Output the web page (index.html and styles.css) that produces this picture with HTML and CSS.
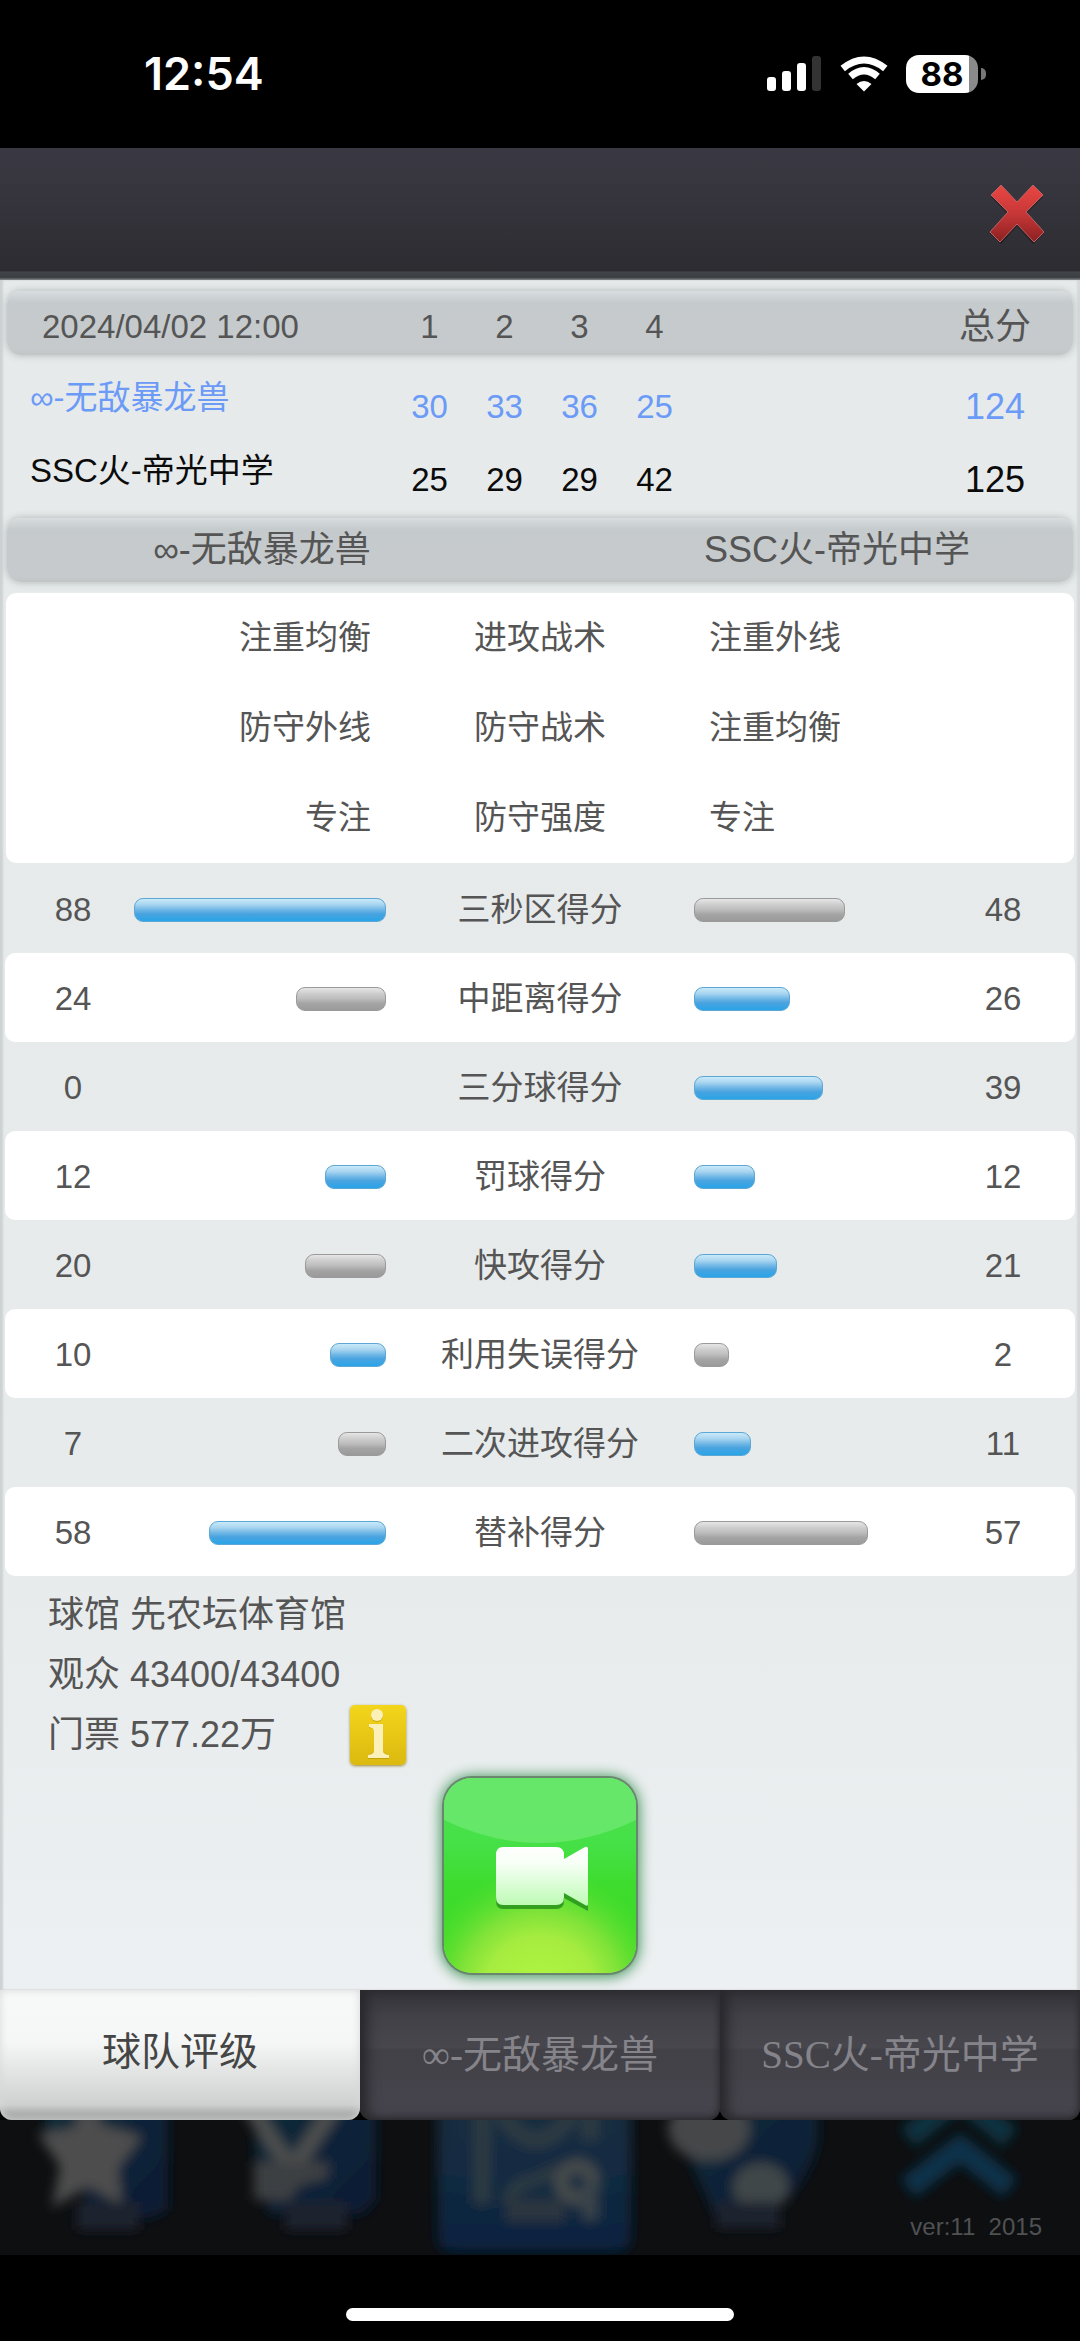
FILE: index.html
```html
<!DOCTYPE html>
<html lang="zh-CN">
<head>
<meta charset="utf-8">
<meta name="viewport" content="width=device-width, initial-scale=1">
<title>比赛统计</title>
<link rel="stylesheet" href="styles.css">
</head>
<body>
<div class="status">
  <time class="clock">12:54</time>
  <div class="status-icons">
    <svg width="56" height="36" viewBox="0 0 56 36" aria-hidden="true">
      <g fill="#fff"><rect x="1" y="21" width="9" height="14" rx="3"/><rect x="16" y="15" width="9" height="20" rx="3"/><rect x="31" y="7" width="9" height="28" rx="3"/></g>
      <rect x="46" y="0" width="9" height="35" rx="3" fill="#333"/>
    </svg>
    <svg width="48" height="36" viewBox="0 0 48 36" fill="none" stroke="#fff" stroke-width="7" aria-hidden="true">
      <path d="M2.700 12.500Q24 -4.500 45.300 12.500"/>
      <path d="M10.500 20.500Q24 9 37.500 20.500"/>
      <path d="M24 35.500L16.500 28Q24 22 31.500 28Z" fill="#fff" stroke="none"/>
    </svg>
    <div class="battery"><span class="level">88</span></div>
    <span class="cap"></span>
  </div>
</div>

<header class="topbar">
  <button class="close" aria-label="关闭">
    <svg width="56" height="60" viewBox="0 0 56 60" aria-hidden="true">
      <defs><linearGradient id="red" x1="0" y1="0" x2="0" y2="1"><stop offset="0" stop-color="#ea4743"/><stop offset=".5" stop-color="#c73737"/><stop offset="1" stop-color="#8c2021"/></linearGradient></defs>
      <path d="M12 4L28 21L44 4L54 13L37 30L55 49L44 60L28 42L12 60L1 49L19 30L2 13Z" fill="#221416" opacity=".6"/>
      <path d="M12 1L28 18L44 1L54 11L37 28L55 48L45 58L28 40L11 58L1 48L19 28L2 11Z" fill="url(#red)" stroke="#b96466" stroke-width="1"/>
    </svg>
  </button>
</header>

<main class="panel">
  <table class="score">
    <thead>
      <tr class="band score-row"><th class="date">2024/04/02 12:00</th><th>1</th><th>2</th><th>3</th><th>4</th><th class="total-head">总分</th></tr>
    </thead>
    <tbody>
      <tr class="score-row own"><th class="name">∞-无敌暴龙兽</th><td>30</td><td>33</td><td>36</td><td>25</td><td class="total">124</td></tr>
      <tr class="score-row"><th class="name">SSC火-帝光中学</th><td>25</td><td>29</td><td>29</td><td>42</td><td class="total">125</td></tr>
    </tbody>
  </table>

  <div class="band teams"><span>∞-无敌暴龙兽</span><span>SSC火-帝光中学</span></div>

  <table class="tactics">
    <tbody>
      <tr><td class="home">注重均衡</td><th>进攻战术</th><td>注重外线</td></tr>
      <tr><td class="home">防守外线</td><th>防守战术</th><td>注重均衡</td></tr>
      <tr><td class="home">专注</td><th>防守强度</th><td>专注</td></tr>
    </tbody>
  </table>

  <table class="stats">
    <tbody>
      <tr><td>88</td><td class="track left"><span class="bar lead" style="width:252px"></span></td><th>三秒区得分</th><td class="track"><span class="bar" style="width:151px"></span></td><td>48</td></tr>
      <tr><td>24</td><td class="track left"><span class="bar" style="width:90px"></span></td><th>中距离得分</th><td class="track"><span class="bar lead" style="width:96px"></span></td><td>26</td></tr>
      <tr><td>0</td><td class="track left"></td><th>三分球得分</th><td class="track"><span class="bar lead" style="width:129px"></span></td><td>39</td></tr>
      <tr><td>12</td><td class="track left"><span class="bar lead" style="width:61px"></span></td><th>罚球得分</th><td class="track"><span class="bar lead" style="width:61px"></span></td><td>12</td></tr>
      <tr><td>20</td><td class="track left"><span class="bar" style="width:81px"></span></td><th>快攻得分</th><td class="track"><span class="bar lead" style="width:83px"></span></td><td>21</td></tr>
      <tr><td>10</td><td class="track left"><span class="bar lead" style="width:56px"></span></td><th>利用失误得分</th><td class="track"><span class="bar" style="width:35px"></span></td><td>2</td></tr>
      <tr><td>7</td><td class="track left"><span class="bar" style="width:48px"></span></td><th>二次进攻得分</th><td class="track"><span class="bar lead" style="width:57px"></span></td><td>11</td></tr>
      <tr><td>58</td><td class="track left"><span class="bar lead" style="width:177px"></span></td><th>替补得分</th><td class="track"><span class="bar" style="width:174px"></span></td><td>57</td></tr>
    </tbody>
  </table>

  <section class="venue">
    <p>球馆 先农坛体育馆</p>
    <p>观众 43400/43400</p>
    <p><span class="ticket">门票 577.22万</span>
      <button class="info" aria-label="门票说明">
        <svg width="56" height="60" viewBox="0 0 56 60" aria-hidden="true">
          <g fill="#a88a08" opacity=".5"><circle cx="27" cy="11" r="6"/><path d="M19 20H33V47L39 50V54H18V50L24 47V24L19 23Z"/></g>
          <g fill="#faf0b8"><circle cx="27" cy="10" r="6"/><path d="M19 19H33V46Q33 49 39 50V53H18V50Q24 49 24 46V26Q24 23 19 22Z"/></g>
        </svg>
      </button>
    </p>
  </section>

  <button class="replay" aria-label="观看录像">
    <svg width="192" height="195" viewBox="0 0 192 195" aria-hidden="true">
      <defs>
        <linearGradient id="grn" x1="0" y1="0" x2="0" y2="1"><stop offset="0" stop-color="#4fe255"/><stop offset=".35" stop-color="#45e046"/><stop offset=".55" stop-color="#3edc2e"/><stop offset="1" stop-color="#3fda25"/></linearGradient>
        <radialGradient id="glow" gradientUnits="userSpaceOnUse" cx="96" cy="215" r="125"><stop offset="0" stop-color="#b2f742"/><stop offset=".45" stop-color="#a6ec40"/><stop offset=".65" stop-color="#8be43b" stop-opacity=".85"/><stop offset="1" stop-color="#58e02e" stop-opacity="0"/></radialGradient>
        <linearGradient id="cam" x1="0" y1="0" x2="0" y2="1"><stop offset="0" stop-color="#fff"/><stop offset=".3" stop-color="#f6fff5"/><stop offset="1" stop-color="#bdfbb4"/></linearGradient>
      </defs>
      <rect width="192" height="195" fill="url(#grn)"/>
      <rect width="192" height="195" fill="url(#glow)"/>
      <path d="M0 0H192V42Q96 88 0 42Z" fill="#6be86f" opacity=".85"/>
      <path d="M59 73H112Q120 73 120 81V83L144 72V133L120 120V123Q120 131 112 131H59Q52 131 52 123V81Q52 73 59 73Z" fill="#258f1c" opacity=".8"/>
      <path d="M59 69H112Q120 69 120 77V81L141 69Q144 68 144 71V126Q144 129 141 127L120 115V119Q120 127 112 127H59Q52 127 52 119V77Q52 69 59 69Z" fill="url(#cam)"/>
    </svg>
  </button>
</main>

<nav class="tabs">
  <button class="tab active">球队评级</button>
  <button class="tab">∞-无敌暴龙兽</button>
  <button class="tab">SSC火-帝光中学</button>
</nav>

<div class="dock">
  <svg class="dock-art" viewBox="0 0 1080 135" preserveAspectRatio="none" aria-hidden="true">
    <defs>
      <filter id="soft" x="-10%" y="-10%" width="120%" height="120%"><feGaussianBlur stdDeviation="6"/></filter>
      <linearGradient id="b" x1="0" y1="0" x2="1" y2="1"><stop offset="0" stop-color="#0b2c3a"/><stop offset="1" stop-color="#081b35"/></linearGradient>
      <linearGradient id="b2" x1="0" y1="0" x2="0" y2="1"><stop offset="0" stop-color="#1d2d40"/><stop offset=".5" stop-color="#132c42"/><stop offset="1" stop-color="#06213f"/></linearGradient>
    </defs>
    <g filter="url(#soft)">
      <path d="M45 -20H168V90L150 98H100L45 20Z" fill="url(#b)"/>
      <path d="M88 -30L102 5L142 16L118 48L122 85L88 66L52 88L60 46L38 14L74 8Z" fill="#4d4d4d"/>
      <path d="M255 -20H376V80L362 94H270L255 50Z" fill="url(#b)"/>
      <path d="M252 -10L292 50L332 -10" fill="none" stroke="#4c4d4e" stroke-width="17"/>
      <path d="M254 42H328V58L298 66L290 80H254Z" fill="#3c3f42"/>
      <rect x="438" y="-40" width="193" height="172" rx="14" fill="url(#b2)"/>
      <path d="M482 -10V84M590 -10V20M500 -10Q535 50 575 -10" fill="none" stroke="#2f3a42" stroke-width="16"/>
      <path d="M508 84Q508 66 530 62L558 50" fill="none" stroke="#2f3a42" stroke-width="12"/>
      <circle cx="577" cy="62" r="16" fill="none" stroke="#474b4c" stroke-width="14"/>
      <path d="M590 60V100" stroke="#37424a" stroke-width="16"/>
      <path d="M506 78H565V102H506Z" fill="#293440"/>
      <path d="M680 -20H818V20Q812 55 785 82L760 96H715L690 40Z" fill="url(#b)"/>
      <ellipse cx="709" cy="9" rx="41" ry="32" fill="#444748"/>
      <ellipse cx="761" cy="67" rx="28" ry="24" fill="#41464a"/>
      <path d="M908 18L960 -24L1010 18" fill="none" stroke="#083340" stroke-width="24"/>
      <path d="M908 68L960 28L1010 68" fill="none" stroke="#0a3048" stroke-width="24"/>
      <g fill="#1d222e"><rect x="77" y="82" width="62" height="28"/><rect x="285" y="82" width="62" height="28"/><rect x="716" y="82" width="64" height="26"/></g>
    </g>
  </svg>
  <small class="version">ver:11&nbsp; 2015</small>
</div>
<footer class="home-area"><span class="home-bar"></span></footer>
</body>
</html>
```
FILE: styles.css
```css
* { box-sizing: border-box; }
body {
  margin: 0;
  min-height: 100vh;
  display: flex;
  flex-direction: column;
  background: #000;
  color: #555;
  font-family: "Liberation Sans", "Noto Sans CJK SC", sans-serif;
  font-size: 33px;
  line-height: 40px;
}
button { margin: 0; padding: 0; border: 0; background: none; font: inherit; color: inherit; }
svg { display: block; }
th { font-weight: 400; }
td, th { padding: 0; text-align: center; }
p { margin: 0; }

/* Status bar */
.status {
  height: 148px;
  padding: 0 94px 0 144px;
  display: flex;
  justify-content: space-between;
  align-items: center;
  color: #fff;
  font-family: Inter, sans-serif;
  font-weight: 600;
}
.clock { font-size: 45px; }
.status-icons { display: flex; align-items: center; }
.status-icons svg { margin-right: 18px; }
.battery {
  width: 72px;
  height: 38px;
  border-radius: 13px;
  background: linear-gradient(90deg, #fff 63px, #8a8a8a 63px);
}
.level { display: block; font-size: 33px; line-height: 38px; text-align: center; color: #000; font-weight: 700; }
.cap { width: 5px; height: 12px; margin-left: 3px; border-radius: 0 5px 5px 0; background: #777; }

/* Header */
.topbar {
  height: 132px;
  padding: 0 35px 0 0;
  display: flex;
  justify-content: flex-end;
  align-items: center;
  background: linear-gradient(#3a3943, #36353e 35%, #2d2c31 93%, #414549 94%, #3b3e41 98%, #84888a);
}

/* Panel */
.panel {
  padding: 11px 5px 17px;
  background: linear-gradient(#e6eaeb, #e7ebec 75%, #edf0f2);
  box-shadow: inset 3px 0 2px #cdd2d3, inset -3px 0 2px #d5d9da;
}
table { display: block; border-spacing: 0; }
tbody, thead { display: block; }
.band {
  height: 64px;
  margin: 0 2px;
  border-radius: 14px;
  background: linear-gradient(#d8dddf, #c5cacc 18%, #c6cacc 92%, #c0c5c5);
  box-shadow: 0 0 7px 1px #b9bfbf;
}
.score-row {
  display: grid;
  grid-template-columns: 385px repeat(4, 75px) 1fr;
  align-items: center;
}
.score .band { padding-top: 8px; }
.date, .name { text-align: left; }
.date { padding-left: 35px; }
.total, .total-head { justify-self: end; width: 156px; }
.total-head, .total { font-size: 36px; }
.score tbody { padding: 6px 2px 11px; }
.score tbody tr { height: 73px; color: #0b0b0b; }
.score tbody .own { color: #6b9af7; }
.name { padding-left: 23px; }
.score td { padding-top: 18px; }
.teams { display: grid; grid-template-columns: 510px 1fr; align-items: center; text-align: center; font-size: 36px; }
.teams span:last-child { padding-left: 84px; }

.tactics { margin: 11px 1px 1px; border-radius: 10px; background: #fff; }
.tactics tr { display: grid; grid-template-columns: 1fr 338px 1fr; align-items: center; height: 90px; }
.tactics td { text-align: left; }
.tactics .home { text-align: right; }

.stats tr {
  display: grid;
  grid-template-columns: 114px 256fr 308px 252fr 114px;
  align-items: center;
  height: 89px;
  padding: 2px 15px 0 11px;
  border-radius: 10px;
}
.stats tr:nth-child(even) { background: #fff; }
.track { display: flex; }
.left { justify-content: flex-end; }
.bar {
  height: 24px;
  border: 1px solid #9a9a9a;
  border-radius: 9px;
  background: linear-gradient(#e6e6e6, #cfcece 25%, #bdbdbd 48%, #a4a4a4 70%, #9a9a9a);
}
.lead {
  border-color: #5ca7d3;
  background: linear-gradient(#c9eaf9, #a9d5f0 25%, #72b8e6 48%, #49a3df 68%, #2aa4e8);
}

.venue { padding: 9px 43px 0; font-size: 36px; line-height: 60px; }
.venue p { display: flex; }
.ticket { width: 302px; }
.info {
  border-radius: 5px;
  background: linear-gradient(#f3d51b, #dcb90f);
  box-shadow: 0 1px 3px #9c8a3c;
}
.replay {
  display: block;
  margin: 13px auto 0;
  border-radius: 28px;
  overflow: hidden;
  box-shadow: 0 0 0 2px #6a866e, 0 1px 14px 3px #3f9357;
}

/* Tabs */
.tabs { display: grid; grid-template-columns: 1fr 1fr 1fr; font-size: 39px; }
.tab {
  height: 130px;
  border-radius: 0 0 12px 12px;
  background: linear-gradient(#333237, #424147 20%, #48474d 44%, #424147 46%, #46454e);
  box-shadow: inset 8px 0 12px #29292d, inset -2px -2px 5px #303034;
  color: #85848a;
  font-family: "Liberation Serif", "Noto Sans CJK SC", serif;
}
.active {
  padding-bottom: 6px;
  background: linear-gradient(#f8faf9, #f5f7f6 40%, #cfd1d1 88%, #acaead 95%, #a2a3a3);
  box-shadow: inset 0 0 8px #d5d8d7;
  color: #454545;
}

/* Dimmed dock */
.dock {
  height: 135px;
  display: grid;
  align-items: end;
  background: #0d0f11;
  overflow: hidden;
}
.dock-art, .version { grid-area: 1 / 1; }
.dock-art { width: 100%; height: 135px; }
.version { justify-self: end; padding: 0 38px 13px 0; font-size: 24px; line-height: 30px; color: #505153; }

.home-area { flex: 1; min-height: 86px; display: flex; justify-content: center; align-items: end; padding-bottom: 20px; }
.home-bar { width: 36%; height: 13px; border-radius: 7px; background: #fff; }
```
